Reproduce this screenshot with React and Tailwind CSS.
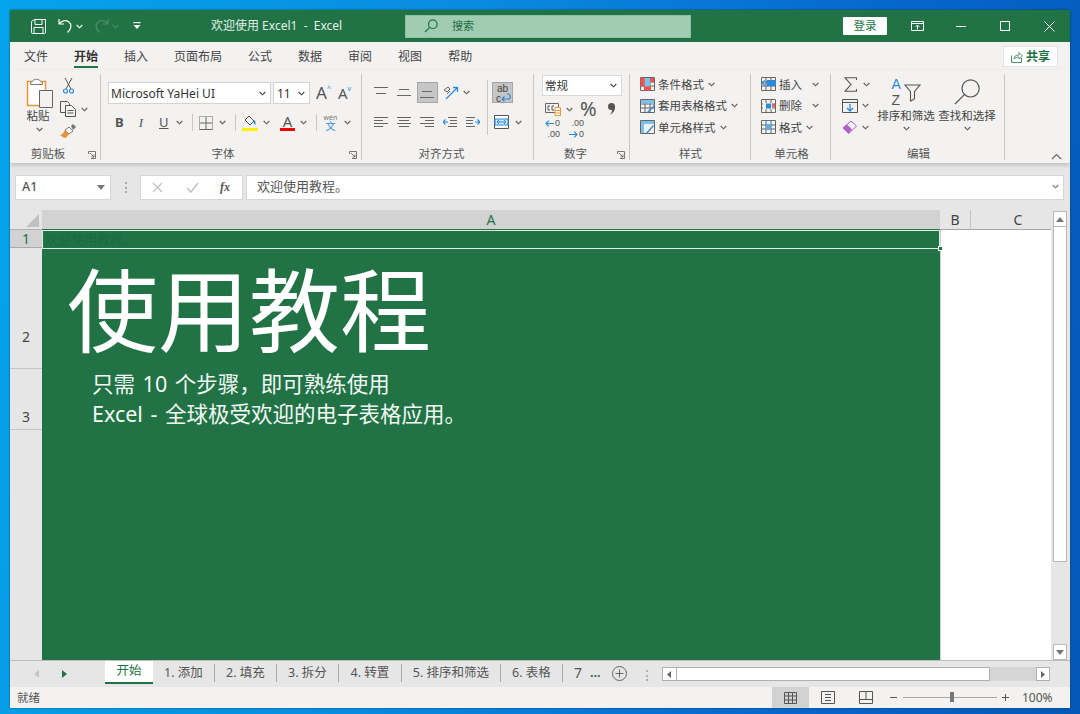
const Chev = ({ c = "#605e5c", className = "" }) => (
  <svg width="7" height="5" viewBox="0 0 7 5" className={"shrink-0 " + className}><path d="M.7 1 3.5 3.8 6.3 1" fill="none" stroke={c} strokeWidth="1.1" /></svg>
);
const G = "#217346", B = "#2b8ad8";

const Save = () => (<svg width="17" height="17" viewBox="0 0 17 17" fill="none" stroke="#fff" strokeWidth="1"><path d="M1.5 3.5v11a1 1 0 0 0 1 1h12a1 1 0 0 0 1-1V1.500h-11z" /><path d="M5 1.500v5h7v-5M4 15.500v-6h9v6" /></svg>);
const Undo = ({ c = "#fff", flip }) => (<svg width="15" height="16" viewBox="0 0 15 16" fill="none" stroke={c} strokeWidth="1.200" style={flip ? { transform: "scaleX(-1)" } : undefined}><path d="M1 1v5h5M1.300 6C3 2.500 8 1.800 11 4c3 2.500 2.500 7-1.500 10.500" /></svg>);
const Custom = () => (<svg width="8" height="8" viewBox="0 0 8 8" fill="#fff"><rect x="0.500" y="0" width="7" height="1.200" /><path d="M.5 3h7L4 7z" /></svg>);
const Mag = ({ s = 14, c = G, w = 1.2 }) => (<svg width={s} height={s} viewBox="0 0 14 14" fill="none" stroke={c} strokeWidth={w}><circle cx="8.800" cy="5.200" r="4.300" /><path d="M5.700 8.300 1 13" /></svg>);

const Paste = () => (<svg width="27" height="30" viewBox="0 0 27 30"><path d="M1.500 3.500h18v24h-18z" fill="#fff" stroke="#e8963a" strokeWidth="1.500" /><path d="M6.500 3.500c1-3 7-3 8 0l2 1v2h-12v-2z" fill="#fff" stroke="#777" /><path d="M13.500 12.500h13v17h-13z" fill="#f3f2f1" stroke="#666" /></svg>);
const Cut = () => (<svg width="11" height="16" viewBox="0 0 11 16" fill="none"><path d="M2 0l6 11M9 0 3 11" stroke="#555" /><circle cx="2.500" cy="13" r="2" stroke={B} strokeWidth="1.200" /><circle cx="8.500" cy="13" r="2" stroke={B} strokeWidth="1.200" /></svg>);
const Copy = () => (<svg width="16" height="16" viewBox="0 0 16 16" fill="#f3f2f1" stroke="#555"><path d="M.5.500h7l2 2v9h-9z" /><path d="M5.500 4.500h6l4 4v7h-10z" /><path d="M7.500 9.500h6M7.500 12h6" /></svg>);
const Brush = () => (<svg width="16" height="15" viewBox="0 0 16 15"><path d="M9 3l4 4-4 3-4-4z" fill="#fff" stroke="#777" /><path d="M11 2l2-2 3 3-2 2-1 1z" fill="#777" /><path d="M5 6l4 4-3 4c-2 0-4-1-6-3 1 0 3-1 5-5z" fill="#e8963a" /></svg>);
const Launcher = () => (<svg width="8" height="8" viewBox="0 0 8 8" fill="none" stroke="#777"><path d="M.5 3V.500H7.500V7.500H3M2 2l4 4M6 3.500V6H3.500" /></svg>);

const Lines = ({ rows }) => (
  <svg width="15" height="12" viewBox="0 0 15 12" stroke="#666" fill="none">{rows.map((r, i) => <path key={i} d={`M${r[0]} ${r[1] + .5}H${r[2]}`} />)}</svg>
);
const Indent = ({ flip }) => (
  <svg width="14" height="12" viewBox="0 0 14 12" fill="none" style={flip ? { transform: "scaleX(-1)" } : undefined}><path d="M5 1.500h9M7 4.500h7M7 7.500h7M5 10.500h9" stroke="#666" /><path d="M5 6H0M2.500 3.500 0 6l2.500 2.500" stroke={B} strokeWidth="1.200" /></svg>
);
const Orient = () => (<svg width="16" height="16" viewBox="0 0 16 16" fill="none"><path d="M3 14 14 3M10 2.500h4.500V7" stroke={B} strokeWidth="1.300" /><path d="M1 5l4-3 2 2-3 3zM4 9l3-3" stroke="#666" /></svg>);
const WrapArrow = () => (<svg width="11" height="10" viewBox="0 0 11 10" fill="none"><path d="M1 6h6c3 0 3-5 0-5H6M1 6l2.500-2.500M1 6l2.500 2.500" stroke={B} strokeWidth="1.200" /></svg>);
const Merge = () => (<svg width="15" height="14" viewBox="0 0 15 14" fill="none"><path d="M.5.500h14v13H.500z" stroke="#555" fill="#fff" /><path d="M1 4h13v6H1z" fill="#cfe6f7" stroke={B} /><path d="M3 7h9M5 5 3 7l2 2M10 5l2 2-2 2" stroke={B} /></svg>);
const Currency = () => (<svg width="16" height="14" viewBox="0 0 16 14" fill="none"><path d="M.5 1.500h13v9H.500z" stroke="#666" /><path d="M5 4H3v4h2M9 4H7v4h2" stroke="#555" /><path d="M10 5.500h5.500v8H10z" fill="#fff" stroke="#e8963a" /><path d="M10 8.500h5.500M10 11h5.500" stroke="#e8963a" /></svg>);
const Comma = () => (<svg width="9" height="12" viewBox="0 0 9 12"><circle cx="4.500" cy="3.500" r="3.500" fill="#555" /><path d="M8 4c0 4-2 6-5 8 1.500-2 2.500-4 2-7z" fill="#555" /></svg>);
const ArrL = () => (<svg width="9" height="7" viewBox="0 0 9 7" fill="none"><path d="M9 3.500H1M3.800.700 1 3.500l2.800 2.800" stroke={B} strokeWidth="1.200" /></svg>);
const ArrR = () => (<svg width="9" height="7" viewBox="0 0 9 7" fill="none"><path d="M0 3.500h8M5.200.700 8 3.500 5.200 6.300" stroke={B} strokeWidth="1.200" /></svg>);

const GridIcon = ({ children }) => (
  <svg width="15" height="14" viewBox="0 0 15 14" fill="none"><path d="M.5.500h14v13H.500zM.5 5h14M.5 9h14M5 .500v13M10 .500v13" stroke="#666" />{children}</svg>
);
const Cond = () => <GridIcon><path d="M.5 .5h4v9h-4zM4 9.500h7v4H4z" fill="#ef5350" /><path d="M5 1h5v8H5z" fill="#7cc0ee" /><path d="M10 1h4v4h-4z" fill="#ef5350" /></GridIcon>;
const TableF = () => <GridIcon><path d="M1 1h13v3.500H1z" fill="#7cc0ee" /><path d="M7 13l7-7 1 1-7 7z" fill="#2b8ad8" /></GridIcon>;
const CellS = () => <GridIcon><path d="M1 1h13v12H1z" fill="#f3f2f1" /><path d="M1 1h13v3H1zM1 1h3v12H1z" fill="#7cc0ee" /><path d="M6 13l7-8 1 1-7 8z" fill="#2b8ad8" /></GridIcon>;
const InsC = () => <GridIcon><path d="M6 3h9v6H6z" fill="#2b8ad8" /><path d="M9 6H1M4 3.500 1 6l3 2.500" stroke="#2b8ad8" strokeWidth="1.200" fill="#fff" /></GridIcon>;
const DelC = () => <GridIcon><path d="M2 4h9v6H2z" fill="#f3f2f1" /><path d="M5 4.500h5v5H5z" fill="#2b8ad8" /><path d="M11 5l3 3M14 5l-3 3" stroke="#e05050" strokeWidth="1.300" /></GridIcon>;
const FmtC = () => <GridIcon><path d="M5 4h5v6H5z" fill="#5aaee8" /><path d="M2 0h11" stroke="#2b8ad8" /></GridIcon>;

const Sigma = () => (<svg width="13" height="15" viewBox="0 0 13 15" fill="none" stroke="#555" strokeWidth="1.100"><path d="M12.500 3V.700H1L7 7.500 1 14.300h11.500V12" /></svg>);
const FillD = () => (<svg width="16" height="14" viewBox="0 0 16 14" fill="none"><path d="M.5.500h15v13H.500zM.5 3.500h15" stroke="#555" /><path d="M8 5v7M5 9l3 3 3-3" stroke={B} strokeWidth="1.300" /></svg>);
const Eraser = () => (<svg width="15" height="15" viewBox="0 0 15 15"><path d="M9 1l5.500 5L7 13.500 1 8z" fill="#f3f2f1" stroke="#a860c0" /><path d="M5 4.500l5 5L6.500 13.500 1 8z" fill="#b35fc8" /></svg>);
const Funnel = () => (<svg width="17" height="18" viewBox="0 0 17 18" fill="none"><path d="M1 1h15l-5.500 6.500V15L6.500 17V7.500z" stroke="#555" strokeWidth="1.100" /></svg>);

const RibbonBtn = ({ icon, label, chevClass = "ml-[1px]" }) => (
  <div className="flex items-center gap-[3px] h-[21.5px]">
    {icon}
    <span className="whitespace-nowrap">{label}</span>
    <Chev className={chevClass} />
  </div>
);
const Group = ({ w, label, launcher, children, lx = "" }) => (
  <div className={"relative flex flex-col h-[86px] border-r border-[#c8c6c4] shrink-0 " + w}>
    <div className="flex-1 flex min-h-0">{children}</div>
    <div className={"h-[15px] -mb-[1px] text-center leading-[15px] text-[#555] " + lx}>{label}</div>
    {launcher && <div className="absolute right-[4px] bottom-[1px]"><Launcher /></div>}
  </div>
);
const Sep = () => <div className="w-px h-[17px] bg-[#c8c6c4] shrink-0" />;

const tabs = [
  ["1. 添加", "w-[62px]"], ["2. 填充", "w-[62px]"], ["3. 拆分", "w-[62px]"], ["4. 转置", "w-[63px]"],
  ["5. 排序和筛选", "w-[99px]"], ["6. 表格", "w-[62px]"],
];

export default function App() {
  return (
    <div className="w-[1080px] h-[714px] pt-[10px] pl-[10px] overflow-hidden bg-[linear-gradient(100deg,#05a4ee_0%,#0a8ae0_40%,#0666cc_75%,#0558b8_100%)]" style={{ fontFamily: '"Noto Sans","Noto Sans CJK SC",sans-serif' }}>
      <div className="w-[1060px] h-[698px] flex flex-col bg-[#e6e6e6] text-[11.5px] text-[#444] overflow-hidden shadow-[0_0_2px_rgba(0,60,40,0.7)]">
        {/* Title bar */}
        <div className="h-[32px] shrink-0 bg-[#217346] flex items-center text-white relative">
          <div className="ml-[20px]"><Save /></div>
          <div className="ml-[11px]"><Undo /></div>
          <Chev c="#fff" className="ml-[3px]" />
          <div className="ml-[11px]"><Undo c="#4d8f69" flip /></div>
          <Chev c="#4d8f69" className="ml-[3px]" />
          <div className="ml-[14px]"><Custom /></div>
          <div className="ml-[70px] w-[150px] text-[12px] whitespace-pre text-[#e4efe8]">欢迎使用 Excel1  -  Excel</div>
          <div className="ml-[44px] w-[286px] h-[23px] bg-[#a0cdb1] border border-[#8cc0a0] flex items-center">
            <div className="ml-[18px]"><Mag /></div>
            <span className="ml-[14px] text-[11px] text-[#1f6b42]">搜索</span>
          </div>
          <div className="ml-[152px] w-[44px] h-[18px] bg-white rounded-[1px] flex items-center justify-center text-[11.5px] text-[#217346]">登录</div>
          <svg className="ml-[24px]" width="13" height="10" viewBox="0 0 13 10" fill="none" stroke="#fff"><path d="M.5.500h12v9H.500zM.5 2.500h12M6.500 8.500v-4M4.500 6l2-2 2 2" /></svg>
          <div className="ml-[32px] w-[10px] h-px bg-white" />
          <div className="ml-[34px] w-[10px] h-[10px] border border-white" />
          <svg className="ml-[34px]" width="11" height="11" viewBox="0 0 11 11" stroke="#fff"><path d="M.5.500l10 10M10.500.500l-10 10" /></svg>
        </div>
        {/* Tabs */}
        <div className="h-[28px] shrink-0 bg-[#f3f2f1] flex items-start pl-[14px] relative text-[12px] text-[#444]">
          {["文件", "开始", "插入", "页面布局", "公式", "数据", "审阅", "视图", "帮助"].map((t, i) => (
            <div key={t} className={"h-[26px] flex items-center border-b-2 mr-[26px] pt-[5px] " + (i === 1 ? "border-[#217346] font-bold text-[#333]" : "border-transparent")}>{t}</div>
          ))}
          <div className="absolute right-[12px] top-[4px] w-[55px] h-[21px] bg-white border border-[#e4e4e4] flex items-center justify-center gap-[3px] text-[#217346] font-bold text-[12px]">
            <svg width="12" height="12" viewBox="0 0 12 12" fill="none" stroke="#4f8f6c"><path d="M.5 4.500v7h10V7M3 8c0-3 2-4 5-4V1.500L11.500 5 8 8V6C6 6 4.500 6.500 3 8z" /></svg>共享
          </div>
        </div>
        {/* Ribbon */}
        <div className="h-[93px] shrink-0 bg-[#f3f2f1] pt-[4px] flex shadow-[0_2px_4px_rgba(0,0,0,0.18)] relative z-10">
          <Group w="w-[91px]" label="剪贴板" launcher lx="pr-[14px]">
            <div className="ml-[9px] w-[40px] flex flex-col items-center pt-[4px]">
              <Paste />
              <span className="h-[16px] leading-[16px] -ml-[2px]">粘贴</span>
              <Chev className="mt-[3px]" />
            </div>
            <div className="ml-[1px] flex flex-col pt-[4px] gap-[7px]">
              <div className="ml-[3px]"><Cut /></div>
              <div className="flex items-center gap-[5px]"><Copy /><Chev /></div>
              <Brush />
            </div>
          </Group>
          <Group w="w-[261px]" label="字体" launcher lx="pr-[16px]">
            <div className="pl-[7px] pt-[8px] flex flex-col w-full">
              <div className="flex items-center h-[22px]">
                <div className="w-[163px] h-[22px] bg-white border border-[#d2d2d2] flex items-center justify-between pl-[2px] pr-[4px] text-[12px] text-[#333]"><span className="pt-[1px]">Microsoft YaHei UI</span><Chev c="#444" /></div>
                <div className="ml-[2px] w-[37px] h-[22px] bg-white border border-[#d2d2d2] flex items-center justify-between pl-[3px] pr-[4px] text-[12px] text-[#333]"><span className="pt-[1px]">11</span><Chev c="#444" /></div>
                <span className="ml-[6px] text-[17px] leading-[22px] text-[#555]">A</span><span className="text-[#2b8ad8] text-[7px] leading-[8px] -mt-[8px]">^</span>
                <span className="ml-[7px] text-[15px] leading-[22px] text-[#555]">A</span><span className="text-[#2b8ad8] text-[7px] leading-[8px] -mt-[8px]">v</span>
              </div>
              <div className="flex items-center h-[17px] mt-[10px] text-[13px] text-[#555]">
                <span className="ml-[7px] w-[8px] font-bold text-center">B</span>
                <span className="ml-[14px] w-[8px] text-center italic" style={{ fontFamily: '"Liberation Serif",serif' }}>I</span>
                <span className="ml-[14px] w-[8px] text-center underline">U</span>
                <Chev className="ml-[9px]" />
                <div className="ml-[9px]"><Sep /></div>
                <svg className="ml-[6px]" width="14" height="14" viewBox="0 0 14 14" fill="none" stroke="#666"><path d="M.5.500h13v13H.500z" strokeDasharray="1 1" /><path d="M.5 13.500h13M7 1v12M1 7h12" /></svg>
                <Chev className="ml-[6px]" />
                <div className="ml-[9px]"><Sep /></div>
                <svg className="ml-[6px]" width="16" height="16" viewBox="0 0 16 16" fill="none"><path d="M7 1l5 5-4 4-5-5z" stroke="#555" /><path d="M12 5c2 1 2 4 1 5-1-1-2-3-1-5z" fill="#2b8ad8" /><path d="M0 13h16v3H0z" fill="#fff200" /></svg>
                <Chev className="ml-[5px]" />
                <div className="ml-[10px] w-[15px] h-[16px] relative flex justify-center text-[15px] leading-[13px]">A<div className="absolute left-0 bottom-0 w-[15px] h-[3px] bg-[#f00000]" /></div>
                <Chev className="ml-[5px]" />
                <div className="ml-[9px]"><Sep /></div>
                <div className="ml-[6px] w-[15px] flex flex-col items-center"><span className="text-[7px] leading-[7px] text-[#777]">wén</span><span className="text-[10px] leading-[10px] text-[#2b8ad8]">文</span></div>
                <Chev className="ml-[6px]" />
              </div>
            </div>
          </Group>
          <Group w="w-[172px]" label="对齐方式" lx="pr-[12px]">
            <div className="pl-[12px] pt-[8px] flex relative">
              <div className="w-[113px] flex flex-col">
                <div className="flex items-center h-[21px]">
                  <Lines rows={[[0, 0, 14], [2, 6, 12]]} />
                  <div className="ml-[8px]"><Lines rows={[[2, 2, 12], [0, 8, 14]]} /></div>
                  <div className="ml-[5px] w-[21px] h-[21px] bg-[#c6c6c6] border border-[#a6a6a6] flex items-center justify-center"><Lines rows={[[2, 4, 12], [0, 10, 14]]} /></div>
                  <div className="ml-[5px]"><Orient /></div>
                  <Chev className="ml-[4px]" />
                </div>
                <div className="flex items-center h-[14px] mt-[12px]">
                  <Lines rows={[[0, 1, 14], [0, 4, 9], [0, 7, 14], [0, 10, 9]]} />
                  <div className="ml-[8px]"><Lines rows={[[0, 1, 14], [2, 4, 12], [0, 7, 14], [2, 10, 12]]} /></div>
                  <div className="ml-[8px]"><Lines rows={[[0, 1, 14], [5, 4, 14], [0, 7, 14], [5, 10, 14]]} /></div>
                  <div className="ml-[8px]"><Indent /></div>
                  <div className="ml-[9px]"><Indent flip /></div>
                </div>
              </div>
              <div className="w-px h-[55px] bg-[#c8c6c4] -mt-[2px]" />
              <div className="ml-[4px] flex flex-col">
                <div className="w-[21px] h-[21px] bg-[#c6c6c6] border border-[#a6a6a6] flex items-start pl-[3px] text-[10px] leading-[9px] text-[#444]" style={{ fontFamily: '"Liberation Sans",sans-serif' }}>
                  <div className="flex flex-col pt-[1px]"><span className="pl-[1px]">ab</span><div className="flex items-center"><span>c</span><WrapArrow /></div></div>
                </div>
                <div className="flex items-center h-[14px] mt-[12px] ml-[2px]"><Merge /><Chev className="ml-[6px]" /></div>
              </div>
            </div>
          </Group>
          <div className="shrink-0 w-[96px] relative flex flex-col h-[86px] border-r border-[#c8c6c4]">
            <div className="flex-1 pl-[8px] pt-[1px] flex flex-col">
              <div className="w-[80px] h-[21px] bg-white border border-[#d8d8d8] flex items-center justify-between pl-[2px] pr-[4px] text-[#333]">常规<Chev c="#444" /></div>
              <div className="flex items-center h-[18px] mt-[4px] ml-[3px]">
                <Currency /><Chev className="ml-[5px]" />
                <span className="ml-[7px] text-[20px] text-[#555] leading-[18px]">%</span>
                <div className="ml-[10px]"><Comma /></div>
              </div>
              <div className="flex items-center mt-[0px] ml-[3px] text-[9px] leading-[11px] text-[#555] gap-[9px]" style={{ fontFamily: '"Liberation Sans",sans-serif' }}>
                <div className="w-[15px] flex flex-col">
                  <div className="flex items-center justify-between"><ArrL /><span>0</span></div>
                  <span className="text-right">.00</span>
                </div>
                <div className="w-[15px] flex flex-col">
                  <span className="text-right">.00</span>
                  <div className="flex items-center justify-between"><ArrR /><span>0</span></div>
                </div>
              </div>
            </div>
            <div className="h-[15px] -mb-[1px] text-center leading-[15px] text-[#555] pr-[12px]">数字</div>
            <div className="absolute right-[4px] bottom-[1px]"><Launcher /></div>
          </div>
          <Group w="w-[121px]" label="样式" lx="pl-[1px]">
            <div className="pl-[10px] -mt-[0.5px] flex flex-col">
              <RibbonBtn icon={<Cond />} label="条件格式" />
              <RibbonBtn icon={<TableF />} label="套用表格格式" />
              <RibbonBtn icon={<CellS />} label="单元格样式" />
            </div>
          </Group>
          <Group w="w-[80px]" label="单元格" lx="pl-[2px]">
            <div className="pl-[10px] -mt-[0.5px] flex flex-col">
              <RibbonBtn icon={<InsC />} label="插入" chevClass="ml-[7px]" />
              <RibbonBtn icon={<DelC />} label="删除" chevClass="ml-[7px]" />
              <RibbonBtn icon={<FmtC />} label="格式" />
            </div>
          </Group>
          <Group w="w-[174px]" label="编辑" lx="pl-[2px]">
            <div className="flex">
              <div className="ml-[11px] w-[34px] -mt-[0.5px] flex flex-col">
                <div className="h-[21.5px] flex items-center gap-[6px] ml-[2px]"><Sigma /><Chev /></div>
                <div className="h-[21.5px] flex items-center gap-[4px]"><FillD /><Chev /></div>
                <div className="h-[21.5px] flex items-center gap-[5px]"><Eraser /><Chev /></div>
              </div>
              <div className="w-[60px] flex flex-col items-center pt-[2px]">
                <div className="h-[31px] flex items-start gap-[1px]">
                  <div className="flex flex-col text-[14px] leading-[16px] w-[11px]" style={{ fontFamily: '"Liberation Sans",sans-serif' }}><span className="text-[#2b8ad8]">A</span><span className="text-[#555]">Z</span></div>
                  <div className="mt-[8px]"><Funnel /></div>
                </div>
                <span className="whitespace-nowrap mt-[1px] h-[16px] leading-[16px]">排序和筛选</span>
                <Chev className="mt-[2px]" />
              </div>
              <div className="ml-[1px] w-[60px] flex flex-col items-center pt-[4px]">
                <Mag s={28} c="#555" w={0.6} />
                <span className="whitespace-nowrap mt-[2px] h-[16px] leading-[16px]">查找和选择</span>
                <Chev className="mt-[2px]" />
              </div>
            </div>
          </Group>
          <svg className="absolute right-[8px] bottom-[3px]" width="11" height="7" viewBox="0 0 11 7" fill="none" stroke="#666" strokeWidth="1.200"><path d="M1 6l4.500-4.500L10 6" /></svg>
        </div>
        {/* Formula bar */}
        <div className="h-[47px] shrink-0 flex items-center pl-[5px] pr-[6px] pt-[1px]">
          <div className="w-[96px] h-[25px] bg-white border border-[#d6d6d6] flex items-center justify-between pl-[6px] pr-[5px] text-[#555] text-[12.5px] font-medium">A1<svg width="8" height="5" viewBox="0 0 8 5" fill="#777"><path d="M0 0h8L4 5z" /></svg></div>
          <div className="ml-[14px] w-[2px] h-[11px] border-l-2 border-dotted border-[#aaa]" />
          <div className="ml-[13px] w-[103px] h-[25px] bg-white border border-[#d6d6d6] flex items-center">
            <svg className="ml-[11px]" width="11" height="11" viewBox="0 0 11 11" stroke="#c0c0c0" strokeWidth="1.300"><path d="M1 1l9 9M10 1l-9 9" /></svg>
            <svg className="ml-[23px]" width="13" height="11" viewBox="0 0 13 11" fill="none" stroke="#c0c0c0" strokeWidth="1.500"><path d="M1 6l4 4 7-9" /></svg>
            <span className="ml-[21px] italic text-[#555] font-bold text-[12px]" style={{ fontFamily: '"Liberation Serif",serif' }}>fx</span>
          </div>
          <div className="ml-[3px] flex-1 h-[25px] bg-white border border-[#d6d6d6] flex items-center justify-between pl-[10px] pr-[4px] text-[13px] leading-[20px] pb-[2px] text-[#555]">欢迎使用教程。<Chev c="#777" /></div>
        </div>
        {/* Sheet */}
        <div className="flex-1 flex min-h-0">
          <div className="w-[1041px] flex flex-col shrink-0">
            <div className="h-[20px] flex shrink-0 text-[14px] text-[#444]">
              <div className="w-[32px] flex items-end justify-end pb-[2px] pr-[3px] border-b border-[#b0b0b0]"><div className="w-0 h-0 border-l-[13px] border-l-transparent border-b-[13px] border-b-[#c0c0c0]" /></div>
              <div className="w-[898px] bg-[#d2d2d2] text-[#217346] flex items-center justify-center border-b border-[#217346]">A</div>
              <div className="w-[31px] flex items-center justify-center border-r border-[#c4c4c4] border-b-[#a8a8a8] border-b">B</div>
              <div className="w-[80px] flex items-center justify-center border-b border-[#a8a8a8] pl-[14px]">C</div>
            </div>
            <div className="flex-1 flex min-h-0">
              <div className="w-[32px] shrink-0 flex flex-col text-[14px] text-[#444]">
                <div className="h-[18px] bg-[#d2d2d2] text-[#217346] flex items-center justify-center border-b border-[#a8a8a8]">1</div>
                <div className="h-[121px] flex items-end justify-center pb-[21px] border-b border-[#c4c4c4]">2</div>
                <div className="h-[61px] flex items-end justify-center pb-[2px] border-b border-[#c4c4c4]">3</div>
              </div>
              <div className="w-[898px] shrink-0 bg-[#217346] relative text-white overflow-hidden">
                <div className="h-[18px] text-[13px] leading-[18px] pl-[3px] text-[#1b6a3e]">欢迎使用教程。</div>
                <div className="h-[121px] pl-[25px] pt-[12px] text-[91px] leading-[100px] whitespace-nowrap" style={{ fontWeight: 400 }}>使用教程</div>
                <div className="pl-[50px] text-[21.5px] leading-[30px] [word-spacing:2px] text-[#f3f8f5] whitespace-pre">
                  <div>只需 10 个步骤，即可熟练使用</div>
                  <div>Excel - 全球极受欢迎的电子表格应用。</div>
                </div>
                <div className="absolute left-0 top-0 w-[898px] h-[19px] border border-[#dfeee5]" />
              </div>
              <div className="flex-1 bg-white border-l border-[#d0d0d0] relative">
                <div className="absolute -left-[3px] top-[16px] w-[5px] h-[5px] bg-[#217346] border border-white" />
              </div>
            </div>
          </div>
          <div className="w-[19px] shrink-0 flex flex-col pt-[1px] pl-[2px] pr-[3px]">
            <div className="h-[16px] bg-white border border-[#b8b8b8] flex items-center justify-center"><svg width="8" height="5" viewBox="0 0 8 5" fill="#777"><path d="M4 0l4 5H0z" /></svg></div>
            <div className="h-[335px] bg-white border-x border-b border-[#b8b8b8]" />
            <div className="flex-1" />
            <div className="h-[16px] bg-white border border-[#b8b8b8] flex items-center justify-center"><svg width="8" height="5" viewBox="0 0 8 5" fill="#777"><path d="M0 0h8L4 5z" /></svg></div>
          </div>
        </div>
        {/* Sheet tabs */}
        <div className="h-[27px] shrink-0 border-t border-[#bdbdbd] flex items-start text-[12.5px] text-[#555] relative">
          <svg className="ml-[24px] mt-[9px]" width="5" height="8" viewBox="0 0 5 8" fill="#c4c4c4"><path d="M5 0v8L0 4z" /></svg>
          <svg className="ml-[23px] mt-[9px]" width="5" height="8" viewBox="0 0 5 8" fill="#217346"><path d="M0 0v8l5-4z" /></svg>
          <div className="ml-[38px] w-[48px] h-[23px] bg-white border-b-2 border-[#217346] text-[#217346] flex items-center justify-center">开始</div>
          <div className="flex mt-[3px]">
            {tabs.map(([t, w]) => (
              <div key={t} className={"h-[18px] flex items-center justify-center border-r border-[#a8a8a8] " + w}>{t}</div>
            ))}
          </div>
          <span className="ml-[11px] mt-[1px] text-[14px]">7</span>
          <span className="ml-[8px] mt-[3px] text-[#217346] font-bold">...</span>
          <svg className="ml-[11px] mt-[5px]" width="15" height="15" viewBox="0 0 15 15" fill="none" stroke="#666"><circle cx="7.500" cy="7.500" r="7" /><path d="M7.500 3.500v8M3.500 7.500h8" /></svg>
          <div className="ml-[19px] mt-[9px] w-[2px] h-[11px] border-l-2 border-dotted border-[#b0b0b0]" />
          <div className="ml-[14px] mt-[6px] w-[388px] h-[14px] flex bg-[#d6d6d6]">
            <div className="w-[15px] bg-white border border-[#b0b0b0] flex items-center justify-center"><svg width="4" height="7" viewBox="0 0 4 7" fill="#666"><path d="M4 0v7L0 3.500z" /></svg></div>
            <div className="w-[313px] bg-white border-y border-r border-[#b0b0b0]" />
            <div className="flex-1" />
            <div className="w-[14px] bg-white border border-[#b0b0b0] flex items-center justify-center"><svg width="4" height="7" viewBox="0 0 4 7" fill="#666"><path d="M0 0v7l4-3.500z" /></svg></div>
          </div>
        </div>
        {/* Status bar */}
        <div className="h-[21px] shrink-0 bg-[#f3f2f1] flex items-center text-[11.5px] text-[#555]">
          <span className="ml-[7px]">就绪</span>
          <div className="ml-[732px] w-[37px] h-[21px] bg-[#d2d2d2] flex items-center justify-center">
            <svg width="13" height="12" viewBox="0 0 13 12" fill="none" stroke="#555"><path d="M.5.500h12v11H.500zM.5 4h12M.5 8h12M4.500 0v12M8.500 0v12" /></svg>
          </div>
          <svg className="ml-[12px]" width="14" height="13" viewBox="0 0 14 13" fill="none" stroke="#555"><path d="M.5.500h13v12H.500zM4 3.500h6M4 6.500h6M4 9.500h6" /></svg>
          <svg className="ml-[24px]" width="14" height="13" viewBox="0 0 14 13" fill="none" stroke="#555"><path d="M.5.500h13v12H.500zM.5 8.500h13M7 .500v8" /></svg>
          <div className="ml-[17px] w-[7px] h-px bg-[#555]" />
          <div className="ml-[6px] w-[94px] h-px bg-[#a8a8a8] relative"><div className="absolute left-[47px] -top-[5px] w-[4px] h-[10px] bg-[#777]" /></div>
          <svg className="ml-[5px]" width="7" height="7" viewBox="0 0 7 7" stroke="#555"><path d="M0 3.500h7M3.500 0v7" /></svg>
          <span className="ml-[13px] text-[12px]">100%</span>
        </div>
      </div>
    </div>
  );
}
